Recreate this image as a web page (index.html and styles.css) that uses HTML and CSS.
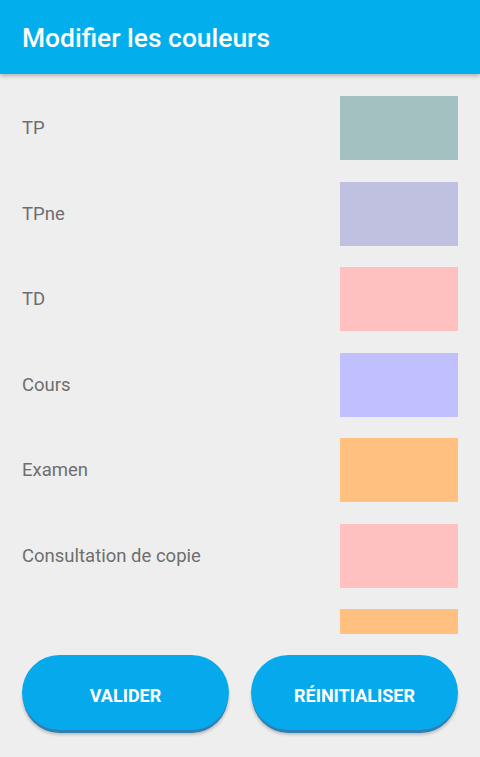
FILE: index.html
```html
<!DOCTYPE html>
<html lang="fr">
<head>
<meta charset="utf-8">
<link rel="stylesheet" href="styles.css">
</head>
<body>
<div class="app">
  <header class="appbar"><h1 class="title">Modifier les couleurs</h1></header>
  <main class="list">
    <div class="row"><span class="label">TP</span><span class="swatch sw-tp"></span></div>
    <div class="row"><span class="label">TPne</span><span class="swatch sw-tpne"></span></div>
    <div class="row"><span class="label">TD</span><span class="swatch sw-td"></span></div>
    <div class="row"><span class="label">Cours</span><span class="swatch sw-cours"></span></div>
    <div class="row"><span class="label">Examen</span><span class="swatch sw-examen"></span></div>
    <div class="row"><span class="label">Consultation de copie</span><span class="swatch sw-copie"></span></div>
    <div class="row"><span class="label">Autre</span><span class="swatch sw-autre"></span></div>
  </main>
  <footer class="actions">
    <button class="btn">VALIDER</button>
    <button class="btn">RÉINITIALISER</button>
  </footer>
</div>
</body>
</html>
```
FILE: styles.css
```css
html, body { margin: 0; padding: 0; }
body {
  background: #eeeeee;
  font-family: Roboto, "Noto Sans", sans-serif;
  width: 480px;
  height: 757px;
  overflow: hidden;
}
.app { display: flex; flex-direction: column; height: 757px; }
.appbar {
  height: 74px;
  background: #03aeec;
  box-shadow: 0 2px 4px rgba(0,0,0,0.25);
  display: flex;
  align-items: center;
  padding: 0 22px;
  position: relative;
  z-index: 1;
  flex: none;
}
.title {
  margin: 0;
  color: #ffffff;
  font-size: 26.4px;
  font-weight: 500;
  padding-top: 2px;
}
.list {
  height: 560px;
  overflow: hidden;
  padding: 22px 22px 0 22px;
  box-sizing: border-box;
  display: flex;
  flex-direction: column;
  gap: 21.5px;
  flex: none;
}
.row {
  display: flex;
  align-items: center;
  justify-content: space-between;
  flex: none;
}
.label { color: #6e6e6e; font-size: 18.5px; }
.swatch { width: 118px; height: 64px; display: block; }
.sw-tp { background: #a2c1c0; }
.sw-tpne { background: #c0c0e0; }
.sw-td { background: #ffc0c0; }
.sw-cours { background: #c0c0ff; }
.sw-examen { background: #ffc080; }
.sw-copie { background: #ffc0c0; }
.sw-autre { background: #ffc080; }
.row:last-child .label { visibility: hidden; }
.actions {
  display: flex;
  gap: 22px;
  padding: 21px 22px 0 22px;
}
.btn {
  flex: 1;
  height: 75px;
  border: none;
  border-radius: 38px;
  background: #06aaec;
  color: #ffffff;
  font-family: Roboto, "Noto Sans", sans-serif;
  font-size: 18px;
  font-weight: 700;
  box-shadow: 0 4px 0 -1px #2c7fb3, 0 5px 3px rgba(0,0,0,0.2);
  padding: 6px 0 0 0;
}
```
